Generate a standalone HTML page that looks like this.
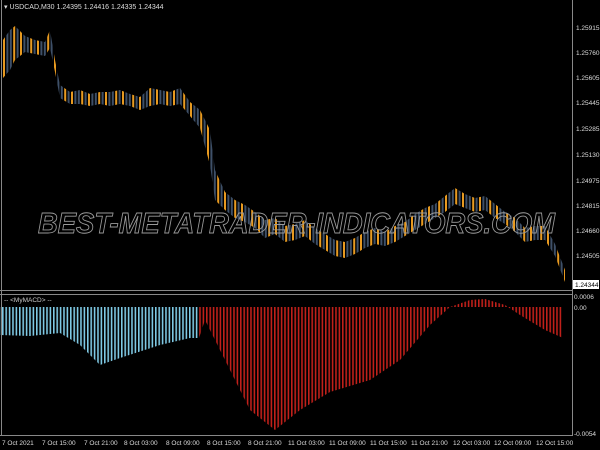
<!DOCTYPE html>
<html><head><meta charset="utf-8"><style>
html,body{margin:0;padding:0;background:#000;width:600px;height:450px;overflow:hidden}
svg{display:block}
text{font-family:"Liberation Sans",sans-serif}
</style></head><body>
<svg width="600" height="450" xmlns="http://www.w3.org/2000/svg">
<defs>
<pattern id="cp" x="3" y="0" width="17" height="450" patternUnits="userSpaceOnUse">
<rect x="0" y="0" width="2" height="450" fill="#e89a20"/>
<rect x="3.4" y="0" width="2" height="450" fill="#3e5068"/>
<rect x="6.8" y="0" width="2" height="450" fill="#3e5068"/>
<rect x="10.2" y="0" width="2" height="450" fill="#e89a20"/>
<rect x="13.6" y="0" width="2" height="450" fill="#3e5068"/>
</pattern>
<pattern id="bp" x="2" y="0" width="3.4" height="450" patternUnits="userSpaceOnUse">
<rect x="0" y="0" width="1.6" height="450" fill="#7ec8e3"/>
</pattern>
<pattern id="rp" x="2" y="0" width="3.4" height="450" patternUnits="userSpaceOnUse">
<rect x="0" y="0" width="1.6" height="450" fill="#c0201a"/>
</pattern>
</defs>
<rect width="600" height="450" fill="#000"/>
<polygon fill="url(#cp)" points="3,40 10,30 15,26 25,36 35,40 45,42 50,30 55,60 60,85 70,92 80,90 90,94 100,92 110,92 120,90 130,94 140,97 150,88 160,90 170,92 180,88 190,102 200,110 210,130 215,170 225,192 235,200 245,205 255,212 265,220 275,218 285,226 295,224 305,220 315,228 325,234 335,240 345,242 355,238 365,232 375,228 385,232 395,226 405,222 415,214 425,208 435,204 445,196 455,188 465,194 475,198 485,196 495,204 505,212 515,218 525,228 535,226 545,226 555,244 565,270 565,282 555,256 545,240 535,240 525,242 515,232 505,224 495,218 485,210 475,212 465,208 455,204 445,212 435,218 425,224 415,230 405,236 395,242 385,246 375,244 365,248 355,254 345,258 335,256 325,250 315,244 305,236 295,240 285,242 275,234 265,238 255,228 245,222 235,218 225,210 215,200 210,165 200,128 190,116 180,104 170,106 160,104 150,106 140,110 130,106 120,104 110,106 100,104 90,106 80,104 70,104 60,98 55,72 50,48 45,56 35,54 25,52 15,60 10,70 3,78"/>
<polygon fill="url(#bp)" points="0,307 0,335 30,336 60,333 80,345 100,365 120,358 160,345 190,338 199,338 199,307"/>
<polygon fill="url(#rp)" points="199,307 199,338 205,320 225,360 250,410 275,430 300,410 330,392 370,380 400,360 430,325 450,307 470,300 485,299 505,305 520,315 545,330 563,338 563,307"/>
<text x="38" y="233" font-size="29" font-style="italic" font-weight="bold" fill="none" stroke="#9a9a9a" stroke-width="0.9" textLength="517" lengthAdjust="spacingAndGlyphs">BEST-METATRADER-INDICATORS.COM</text>
<line x1="1.5" y1="0" x2="1.5" y2="436" stroke="#888"/>
<line x1="572.5" y1="0" x2="572.5" y2="436" stroke="#888"/>
<line x1="0" y1="290.5" x2="573" y2="290.5" stroke="#888"/>
<line x1="0" y1="294.5" x2="573" y2="294.5" stroke="#888"/>
<line x1="0" y1="435.5" x2="573" y2="435.5" stroke="#888"/>
<text x="4" y="9" font-size="7" fill="#ddd">▾ USDCAD,M30  1.24395 1.24416 1.24335 1.24344</text>
<text x="4" y="302" font-size="6.5" fill="#ccc">-- &lt;MyMACD&gt; --</text>
<g font-size="6.5" fill="#ddd">
<text x="576" y="30">1.25915</text>
<text x="576" y="55">1.25760</text>
<text x="576" y="80">1.25605</text>
<text x="576" y="105">1.25445</text>
<text x="576" y="131">1.25285</text>
<text x="576" y="157">1.25130</text>
<text x="576" y="183">1.24975</text>
<text x="576" y="208">1.24815</text>
<text x="576" y="233">1.24660</text>
<text x="576" y="258">1.24505</text>
<text x="574" y="299">0.0006</text>
<text x="574" y="310">0.00</text>
<text x="574" y="436">-0.0054</text>
</g>
<rect x="573" y="280" width="26" height="9" fill="#fff"/>
<text x="575" y="287" font-size="6.5" fill="#000">1.24344</text>
<g font-size="6.5" fill="#ddd">
<text x="2" y="445">7 Oct 2021</text>
<text x="42" y="445">7 Oct 15:00</text>
<text x="84" y="445">7 Oct 21:00</text>
<text x="124" y="445">8 Oct 03:00</text>
<text x="166" y="445">8 Oct 09:00</text>
<text x="207" y="445">8 Oct 15:00</text>
<text x="248" y="445">8 Oct 21:00</text>
<text x="288" y="445">11 Oct 03:00</text>
<text x="329" y="445">11 Oct 09:00</text>
<text x="370" y="445">11 Oct 15:00</text>
<text x="411" y="445">11 Oct 21:00</text>
<text x="453" y="445">12 Oct 03:00</text>
<text x="494" y="445">12 Oct 09:00</text>
<text x="536" y="445">12 Oct 15:00</text>
</g>
</svg>
</body></html>
